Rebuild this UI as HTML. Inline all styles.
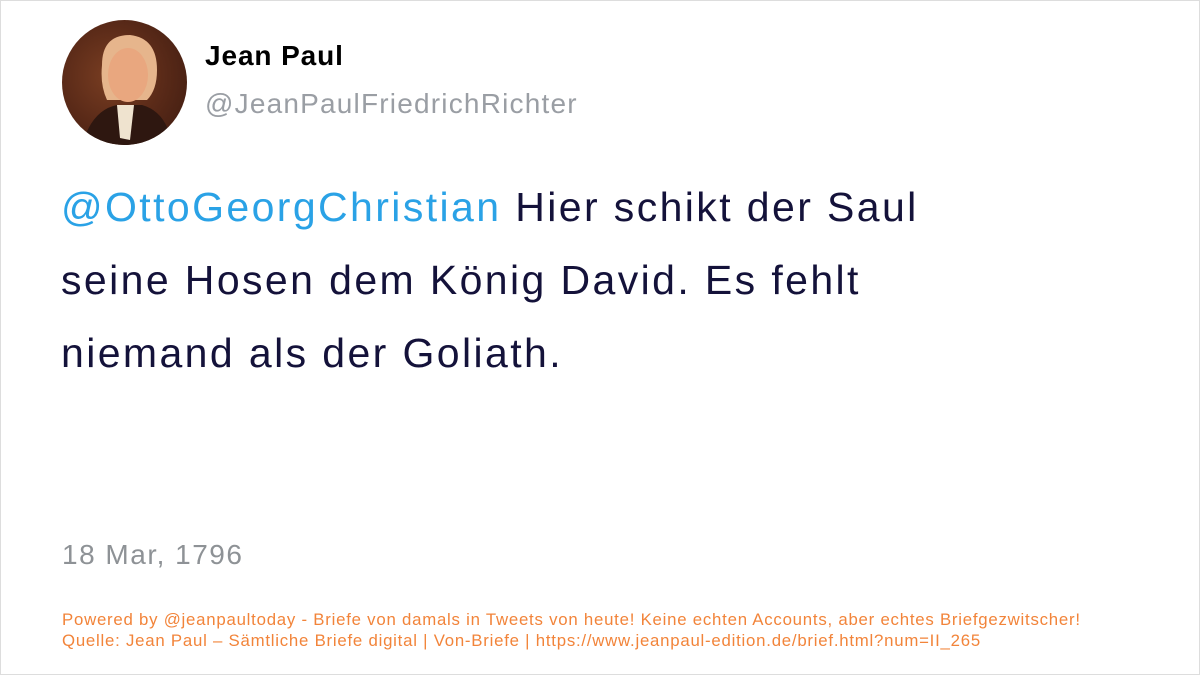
<!DOCTYPE html>
<html><head><meta charset="utf-8"><style>
html,body{margin:0;padding:0;}
body{width:1200px;height:675px;position:relative;background:#fff;font-family:"Liberation Sans",sans-serif;overflow:hidden;}
.frame{position:absolute;left:0;top:0;width:1198px;height:673px;border:1px solid #ddd;}
.av{position:absolute;left:62px;top:20px;width:125px;height:125px;border-radius:50%;overflow:hidden;background:radial-gradient(circle at 40% 45%,#7a3e22 0%,#5a2a18 50%,#3b1a10 100%);}
.name{position:absolute;left:205px;top:40px;font-size:28px;font-weight:bold;color:#000;letter-spacing:0.9px;}
.handle{position:absolute;left:205px;top:88px;font-size:28px;color:#9a9ea4;letter-spacing:1.2px;}
.txt{position:absolute;left:61px;font-size:41px;color:#14123a;white-space:nowrap;letter-spacing:2.4px;}
.at{color:#2aa2e6;}
.date{position:absolute;left:62px;top:539px;font-size:28px;color:#8e9296;letter-spacing:1.5px;}
.foot{position:absolute;left:62px;font-size:16.8px;color:#f2843a;white-space:nowrap;letter-spacing:0.77px;}
</style></head><body>
<div class="frame"></div>
<div class="av"><svg width="125" height="125" viewBox="0 0 125 125">
<path d="M40 45 Q40 15 68 15 Q95 18 95 50 Q95 70 85 80 L45 80 Q38 65 40 45Z" fill="#e6b58c"/>
<ellipse cx="66" cy="55" rx="20" ry="27" fill="#e9a77f"/>
<path d="M20 125 Q30 90 55 85 L80 85 Q105 92 110 125Z" fill="#2e1710"/>
<path d="M55 85 L72 85 L68 120 L58 118Z" fill="#efe3cf"/>
</svg></div>
<div class="name">Jean Paul</div>
<div class="handle">@JeanPaulFriedrichRichter</div>
<div class="txt" style="top:184px"><span class="at">@OttoGeorgChristian</span> Hier schikt der Saul</div>
<div class="txt" style="top:257px">seine Hosen dem König David. Es fehlt</div>
<div class="txt" style="top:330px">niemand als der Goliath.</div>
<div class="date">18 Mar, 1796</div>
<div class="foot" style="top:610px">Powered by @jeanpaultoday - Briefe von damals in Tweets von heute! Keine echten Accounts, aber echtes Briefgezwitscher!</div>
<div class="foot" style="top:631px">Quelle: Jean Paul – Sämtliche Briefe digital | Von-Briefe | https://www.jeanpaul-edition.de/brief.html?num=II_265</div>
</body></html>
